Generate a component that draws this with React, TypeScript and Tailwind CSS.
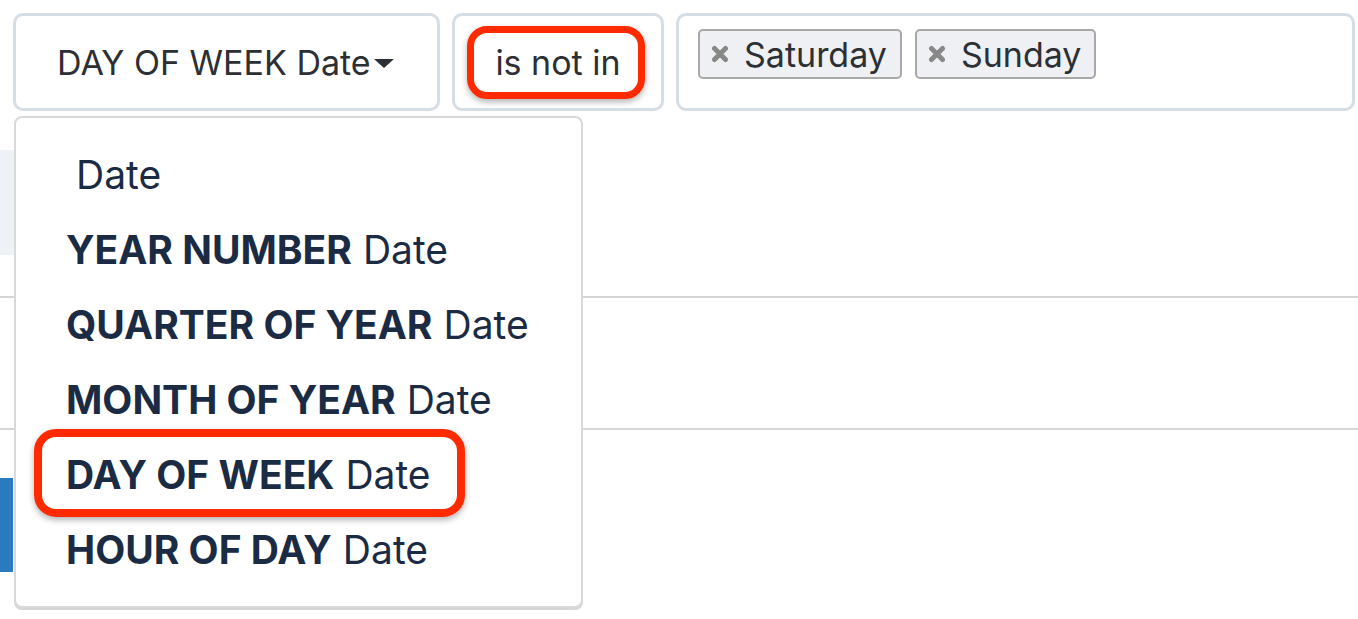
import React from "react";

const items = [
  { bold: "", label: "Date" },
  { bold: "YEAR NUMBER", label: "Date" },
  { bold: "QUARTER OF YEAR", label: "Date" },
  { bold: "MONTH OF YEAR", label: "Date" },
  { bold: "DAY OF WEEK", label: "Date" },
  { bold: "HOUR OF DAY", label: "Date" },
];

function Tag({ label }: { label: string }) {
  return (
    <span className="flex h-[50px] items-center gap-[15px] rounded-[5px] border-2 border-[#a8a8a8] bg-[#eef0f3] pl-[11px] pr-[13px] text-[34px] text-[#2c2f33]">
      <svg width="18" height="18" viewBox="0 0 18 18" className="shrink-0">
        <path d="M3.5 3.5 L14.5 14.5 M14.5 3.5 L3.5 14.5" stroke="#888888" strokeWidth="5" strokeLinecap="round" />
      </svg>
      {label}
    </span>
  );
}

export default function App() {
  return (
    <div className="relative h-[619px] w-full overflow-hidden bg-white font-['Inter',sans-serif]">
      {/* filter bar */}
      <div className="flex gap-[12px] pl-[13px] pr-[3px] pt-[13px]">
        <div className="flex h-[98px] w-[427px] items-center rounded-[10px] border-[3px] border-[#d5dde5] pl-[41px] text-[34px] text-[#2c2f33]">
          DAY OF WEEK Date
          <svg width="20" height="10" viewBox="0 0 20 10" className="ml-[3px] mt-[3px]">
            <path d="M0 0 H20 L10 9 Z" fill="#2c2f33" />
          </svg>
        </div>
        <div className="flex h-[98px] w-[212px] items-center justify-center rounded-[10px] border-[3px] border-[#d5dde5] text-[34px] text-[#2c2f33]">
          is not in
        </div>
        <div className="flex h-[98px] flex-1 items-start gap-[13px] rounded-[10px] border-[3px] border-[#d5dde5] pl-[19px] pt-[13px]">
          <Tag label="Saturday" />
          <Tag label="Sunday" />
        </div>
      </div>

      {/* page content behind the menu */}
      <div className="mt-[39px] h-[105px] w-[14px] bg-[#eef2f7]" />
      <div className="mt-[41px] h-[2px] w-full bg-[#d6d6d6]" />
      <div className="mt-[130px] h-[2px] w-full bg-[#d6d6d6]" />
      <div className="mt-[48px] h-[94px] w-[13px] bg-[#2a7abf]" />

      {/* dropdown menu */}
      <div className="absolute left-[14px] top-[116px] h-[492px] w-[569px] rounded-[8px] border-2 border-[#d9d9d9] bg-white shadow-[0_2px_0_#d6d6d6]">
        <div className="flex flex-col pt-[20px]">
          {items.map((it, i) => (
            <div
              key={i}
              className={`flex h-[75px] items-center text-[39px] text-[#1b2b44] ${it.bold ? "pl-[50px]" : "pl-[60px]"}`}
            >
              {it.bold && <span className="mr-[11px] font-bold">{it.bold}</span>}
              <span>{it.label}</span>
            </div>
          ))}
        </div>
      </div>

      {/* annotation highlights */}
      <div className="absolute left-[467px] top-[26px] h-[73px] w-[178px] rounded-[20px] border-[7px] border-[#ff2a00] shadow-[0_3px_6px_rgba(0,0,0,0.3)]" />
      <div className="absolute left-[34px] top-[429px] h-[88px] w-[431px] rounded-[22px] border-[8px] border-[#ff2a00] shadow-[0_3px_6px_rgba(0,0,0,0.3)]" />
    </div>
  );
}
